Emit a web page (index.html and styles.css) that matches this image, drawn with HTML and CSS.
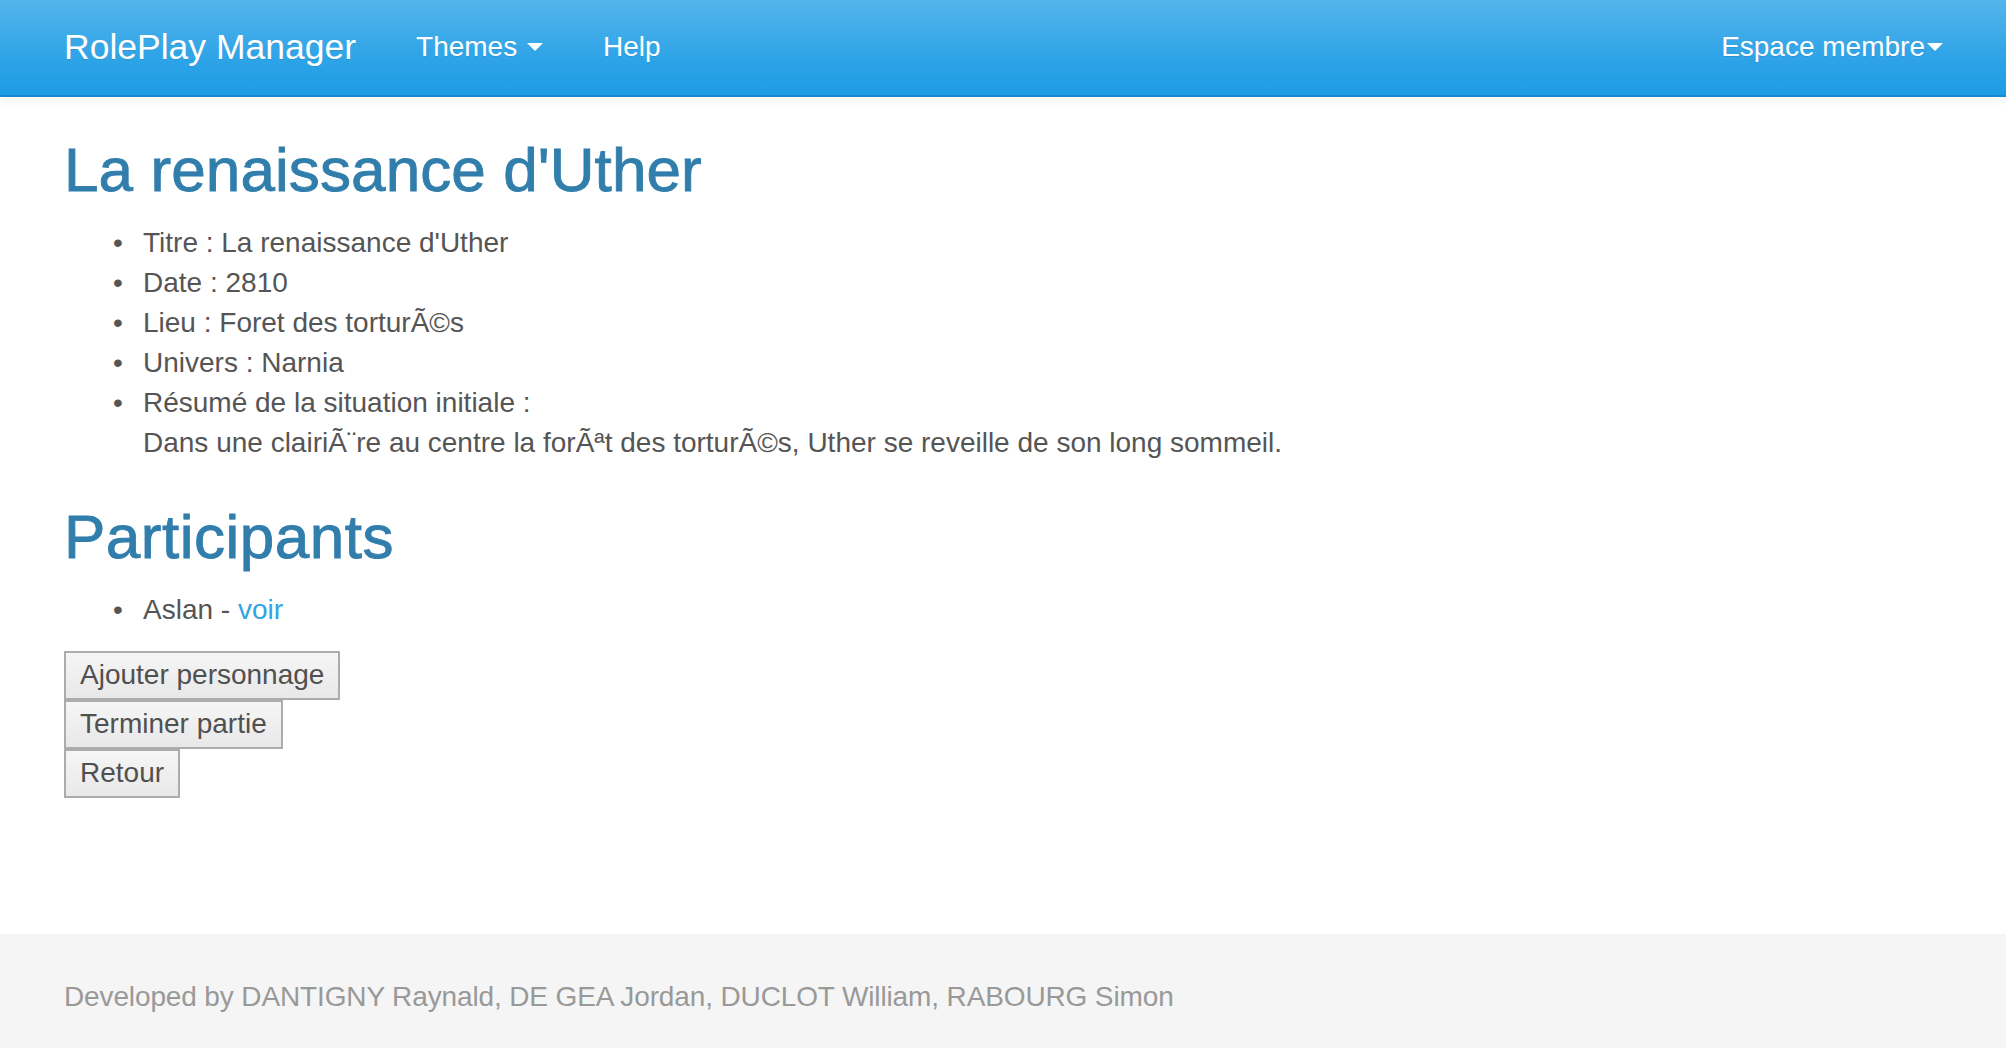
FILE: index.html
```html
<!DOCTYPE html>
<html lang="fr">
<head>
<meta charset="utf-8">
<title>RolePlay Manager</title>
<link rel="stylesheet" href="styles.css">
</head>
<body>
<nav class="navbar">
  <div class="navbar-inner">
    <a class="brand" href="#">RolePlay Manager</a>
    <ul class="nav">
      <li><a href="#">Themes <span class="caret"></span></a></li>
      <li><a href="#">Help</a></li>
    </ul>
    <ul class="nav nav-right">
      <li><a href="#">Espace membre<span class="caret"></span></a></li>
    </ul>
  </div>
</nav>
<main class="container">
  <h1 class="title">La renaissance d'Uther</h1>
  <ul class="info">
    <li>Titre : La renaissance d'Uther</li>
    <li>Date : 2810</li>
    <li>Lieu : Foret des torturÃ©s</li>
    <li>Univers : Narnia</li>
    <li>Résumé de la situation initiale :<br>Dans une clairiÃ¨re au centre la forÃªt des torturÃ©s, Uther se reveille de son long sommeil.</li>
  </ul>
  <h2 class="title">Participants</h2>
  <ul class="info participants">
    <li>Aslan - <a class="link" href="#">voir</a></li>
  </ul>
  <div class="actions">
    <div><button class="btn">Ajouter personnage</button></div>
    <div><button class="btn">Terminer partie</button></div>
    <div><button class="btn">Retour</button></div>
  </div>
</main>
<footer class="footer">
  <p class="footer-text">Developed by DANTIGNY Raynald, DE GEA Jordan, DUCLOT William, RABOURG Simon</p>
</footer>
</body>
</html>
```

FILE: styles.css
```css
html, body {
  margin: 0;
  padding: 0;
}
body {
  font-family: "Liberation Sans", Arial, sans-serif;
  font-size: 28px;
  line-height: 40px;
  color: #555555;
  background: #ffffff;
}
a { text-decoration: none; }

.navbar {
  height: 95px;
  background-image: linear-gradient(#54b4eb, #2fa4e7 60%, #1d9ce5);
  border-bottom: 2px solid #178acc;
  box-shadow: 0 2px 14px rgba(0, 0, 0, 0.06);
  position: relative;
}
.navbar-inner {
  display: flex;
  align-items: center;
  height: 95px;
  padding: 0 34px;
}
.brand {
  color: #ffffff;
  font-size: 35.5px;
  line-height: 40px;
  padding: 0 30px;
  text-shadow: 0 1px 0 rgba(0, 0, 0, 0.1);
  margin-top: -1px;
}
.nav {
  display: flex;
  list-style: none;
  margin: 0;
  padding: 0;
}
.nav a {
  display: block;
  color: #ffffff;
  padding: 0 30px;
  line-height: 40px;
  text-shadow: 0 1px 0 rgba(0, 0, 0, 0.1);
  margin-top: -2px;
}
.nav-right {
  margin-left: auto;
}
.nav-right a {
  padding-right: 0;
  margin-right: 29px;
}
.caret {
  display: inline-block;
  width: 0;
  height: 0;
  vertical-align: middle;
  border-top: 8px solid #ffffff;
  border-left: 8px solid transparent;
  border-right: 8px solid transparent;
  margin-left: 2px;
  margin-top: -2px;
}

.container {
  padding: 0 64px;
}
.title {
  font-size: 62px;
  line-height: 66px;
  font-weight: normal;
  color: #317eac;
  -webkit-text-stroke: 0.9px #317eac;
  margin: 40px 0 20px;
  letter-spacing: 0.1px;
}
h2.title {
  margin-top: 41px;
  letter-spacing: 0.5px;
}
.info {
  list-style: none;
  margin: 0 0 20px;
  padding-left: 79px;
}
.info li::before {
  content: "\2022";
  display: inline-block;
  width: 30px;
  margin-left: -30px;
}
.link {
  color: #2fa4e7;
}
.actions {
  margin-top: 21px;
}
.btn {
  font-family: "Liberation Sans", Arial, sans-serif;
  font-size: 28px;
  line-height: 40px;
  color: #505050;
  background: linear-gradient(#f6f6f6, #e8e8e8);
  border: 2px solid #acacac;
  padding: 2px 14px 3px;
  margin: 0;
  border-radius: 0;
  display: block;
}
.footer {
  margin-top: 136px;
  background: #f5f5f5;
  padding: 43px 64px 51px;
}
.footer-text {
  margin: 0;
  color: #999999;
  letter-spacing: -0.13px;
}
```
